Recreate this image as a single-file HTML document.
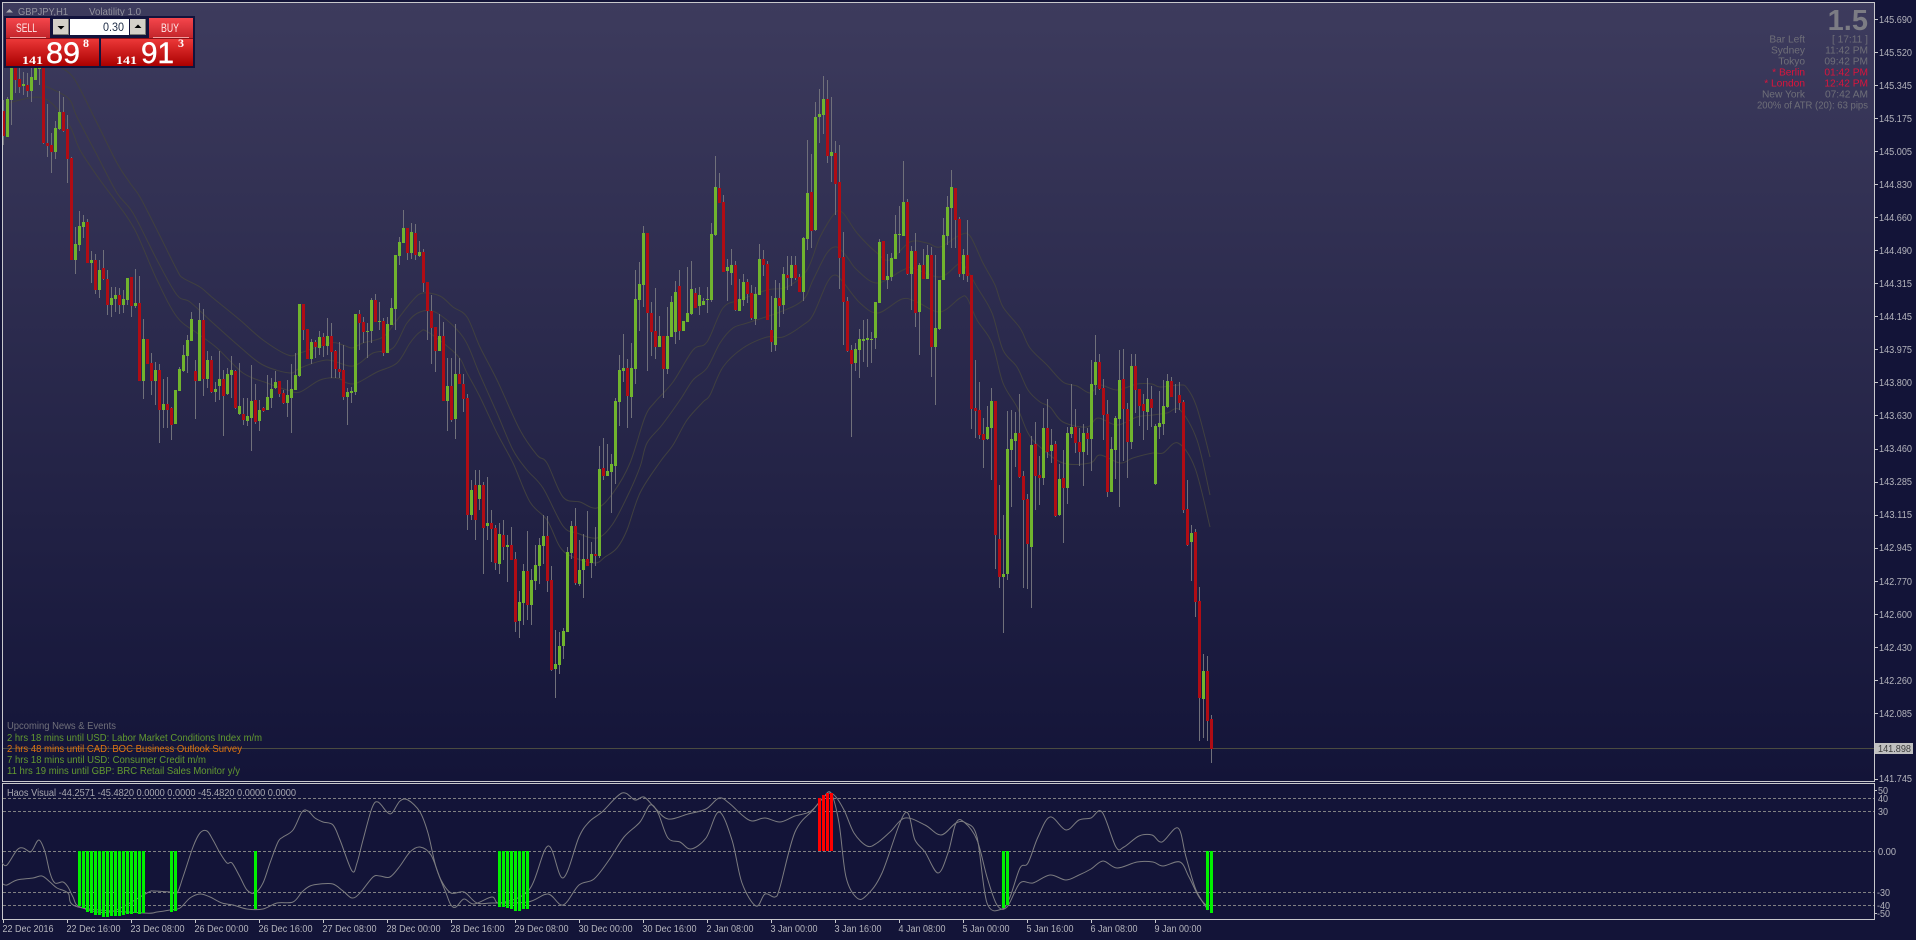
<!DOCTYPE html>
<html lang="en"><head><meta charset="utf-8"><title>GBPJPY,H1</title>
<style>
html,body{margin:0;padding:0;background:#131438;width:1916px;height:940px;overflow:hidden}
svg{display:block}
text{font-family:"Liberation Sans",sans-serif;font-size:10px}
.ax text{fill:#b4b4bc}
.hud text{fill:#6f6f78;text-anchor:end;font-size:10.2px}
.hud text.r{fill:#dc143c}
</style></head><body>
<svg xmlns="http://www.w3.org/2000/svg" width="1916" height="940" viewBox="0 0 1916 940">
<defs>
<linearGradient id="bg" x1="0" y1="0" x2="0" y2="1"><stop offset="0" stop-color="#3d3b5d"/><stop offset="1" stop-color="#131438"/></linearGradient>
<linearGradient id="btn" x1="0" y1="0" x2="0" y2="1"><stop offset="0" stop-color="#f5464c"/><stop offset="1" stop-color="#c2242a"/></linearGradient>
<linearGradient id="big" x1="0" y1="0" x2="0" y2="1"><stop offset="0" stop-color="#ee3a3a"/><stop offset="1" stop-color="#aa0000"/></linearGradient>
</defs>
<rect width="1916" height="940" fill="#131438"/>
<rect x="2" y="2" width="1872" height="779" fill="url(#bg)"/>
<g fill="none" stroke="#404040" stroke-width="1">
<polyline class="s" points="62,68 75,80 97,123 117,163 130,183 140,197 157,230 177,270 183,278 200,287 213,298 240,320 263,340 288,355 300,353 330,343 343,345 352,348 363,343 383,337 397,320 413,300 423,293 440,296 453,307 467,317 480,347 497,380 520,430 537,455 547,463 563,497 580,502 597,508 613,493 630,463 645,417 655,402 673,382 693,350 707,342 723,308 740,300 767,290 787,287 807,270 820,237 835,213 843,213 857,233 877,253 890,260 910,242 927,243 940,247 960,235 970,236 983,263 995,285 1003,307 1020,328 1030,348 1047,365 1063,382 1077,386 1090,393 1100,385 1117,390 1137,384 1152,384 1160,387 1180,385 1187,388 1197,408 1210,457"/>
<polyline class="s" points="43,85 68,98 77,117 97,155 117,193 133,213 157,260 177,295 190,302 213,323 240,347 263,365 290,373 300,368 327,360 353,366 373,353 393,348 407,323 420,312 437,313 463,337 480,375 497,413 513,450 527,470 543,488 563,526 577,533 597,538 612,525 627,497 640,467 647,443 662,425 680,400 693,380 707,368 720,343 733,328 747,323 780,312 803,300 813,280 827,253 837,247 847,257 857,270 877,283 903,270 913,268 940,277 960,263 967,270 977,287 992,313 1003,350 1017,367 1028,390 1040,402 1050,407 1063,422 1087,427 1098,418 1117,425 1137,417 1153,415 1167,413 1180,410 1197,440 1210,495"/>
<polyline class="s" points="8,103 43,98 68,123 80,150 100,180 117,203 135,230 157,280 177,317 197,333 217,348 243,373 267,383 287,390 300,392 320,380 337,378 347,383 357,383 377,372 397,363 410,343 420,332 428,332 457,355 467,373 480,397 497,433 513,463 530,502 547,520 560,547 573,557 595,563 605,557 617,548 627,530 640,493 660,462 673,445 687,420 703,402 710,395 723,367 743,348 767,337 783,337 803,325 813,315 827,283 835,275 843,282 860,303 878,313 902,299 917,302 940,312 960,298 967,298 977,320 992,343 1003,383 1017,407 1028,433 1040,447 1063,463 1090,463 1100,455 1120,463 1133,458 1153,453 1163,453 1178,443 1195,468 1210,527"/>
</g>
<rect x="3" y="748" width="1871" height="1" fill="#4b4b40"/>
<g id="wicks" fill="#70707a" shape-rendering="crispEdges"></g>
<g id="bodies" shape-rendering="crispEdges"></g>

<!-- frame -->
<g fill="#c8c8cc" shape-rendering="crispEdges">
<rect x="2" y="2" width="1872" height="1"/><rect x="2" y="2" width="1" height="779"/>
<rect x="2" y="781" width="1872" height="1"/>
<rect x="1874" y="2" width="1" height="780"/>
<rect x="2" y="783" width="1873" height="1"/><rect x="2" y="783" width="1" height="137"/>
<rect x="2" y="919" width="1873" height="1"/><rect x="1874" y="783" width="1" height="137"/>
</g>

<!-- top label -->
<path d="M6 12.5L9.5 9L13 12.5Z" fill="#a8a8b0"/>
<text x="18" y="15" fill="#92929e" textLength="50" lengthAdjust="spacingAndGlyphs" style="font-size:10.5px">GBPJPY,H1</text>
<text x="89" y="15" fill="#92929e" textLength="52" lengthAdjust="spacingAndGlyphs" style="font-size:10.5px">Volatility 1.0</text>

<!-- trade panel -->
<rect x="4" y="16" width="191" height="52" fill="#12133c"/>
<rect x="6" y="18" width="44" height="20" fill="url(#btn)"/>
<rect x="149" y="18" width="44" height="20" fill="url(#btn)"/>
<rect x="10" y="37" width="36" height="1" fill="#f2a0a0"/>
<rect x="153" y="37" width="36" height="1" fill="#f2a0a0"/>
<rect x="6" y="38" width="93" height="28" fill="url(#big)"/>
<rect x="101" y="38" width="92" height="28" fill="url(#big)"/>
<rect x="6" y="38" width="93" height="1" fill="#8a1018"/>
<rect x="101" y="38" width="92" height="1" fill="#8a1018"/>
<text x="16" y="32" fill="#ffe8e8" textLength="21" lengthAdjust="spacingAndGlyphs" style="font-size:11.5px">SELL</text>
<text x="161" y="32" fill="#ffe8e8" textLength="18" lengthAdjust="spacingAndGlyphs" style="font-size:11.5px">BUY</text>
<rect x="53" y="19" width="16" height="16" fill="#d4d0c8"/>
<rect x="68" y="19" width="1" height="16" fill="#808078"/><rect x="53" y="34" width="16" height="1" fill="#808078"/>
<rect x="70" y="19" width="59" height="16" fill="#ffffff"/>
<rect x="130" y="19" width="16" height="16" fill="#d4d0c8"/>
<rect x="145" y="19" width="1" height="16" fill="#808078"/><rect x="130" y="34" width="16" height="1" fill="#808078"/>
<path d="M57.500 26H64.500L61 29.500Z" fill="#000"/>
<path d="M134.500 28H141.500L138 24.500Z" fill="#000"/>
<text x="103" y="31" fill="#22304a" textLength="21" lengthAdjust="spacingAndGlyphs" style="font-size:12px">0.30</text>
<text x="22" y="64" fill="#fff" textLength="21" lengthAdjust="spacingAndGlyphs" style="font-size:12px;font-family:'Liberation Serif',serif;font-weight:bold">141</text>
<text x="46" y="63" fill="#fff" stroke="#fff" stroke-width=".4" textLength="34" lengthAdjust="spacingAndGlyphs" style="font-size:30px">89</text>
<text x="83" y="47" fill="#fff" style="font-size:12px;font-weight:bold;font-family:'Liberation Serif',serif">8</text>
<text x="116" y="64" fill="#fff" textLength="21" lengthAdjust="spacingAndGlyphs" style="font-size:12px;font-family:'Liberation Serif',serif;font-weight:bold">141</text>
<text x="141" y="63" fill="#fff" stroke="#fff" stroke-width=".4" textLength="33" lengthAdjust="spacingAndGlyphs" style="font-size:30px">91</text>
<text x="178" y="47" fill="#fff" style="font-size:12px;font-weight:bold;font-family:'Liberation Serif',serif">3</text>

<!-- hud -->
<text x="1868" y="30" fill="#7c7c84" text-anchor="end" style="font-size:29px;font-weight:bold">1.5</text>
<g class="hud">
<text x="1805" y="42.500">Bar Left</text><text x="1868" y="42.500">[ 17:11 ]</text>
<text x="1805" y="53.500">Sydney</text><text x="1868" y="53.500">11:42 PM</text>
<text x="1805" y="64.500">Tokyo</text><text x="1868" y="64.500">09:42 PM</text>
<text x="1805" y="75.500" class="r">* Berlin</text><text x="1868" y="75.500" class="r">01:42 PM</text>
<text x="1805" y="86.500" class="r">* London</text><text x="1868" y="86.500" class="r">12:42 PM</text>
<text x="1805" y="97.500">New York</text><text x="1868" y="97.500">07:42 AM</text>
<text x="1868" y="108.500" textLength="111" lengthAdjust="spacingAndGlyphs">200% of ATR (20): 63 pips</text>
</g>

<!-- news -->
<g>
<text x="7" y="729" fill="#70707a" textLength="109" lengthAdjust="spacingAndGlyphs" style="font-size:10.5px">Upcoming News &amp; Events</text>
<text x="7" y="741" fill="#639a30" textLength="255" lengthAdjust="spacingAndGlyphs" style="font-size:10.5px">2 hrs 18 mins until USD: Labor Market Conditions Index m/m</text>
<text x="7" y="752" fill="#e07410" textLength="235" lengthAdjust="spacingAndGlyphs" style="font-size:10.5px">2 hrs 48 mins until CAD: BOC Business Outlook Survey</text>
<text x="7" y="763" fill="#639a30" textLength="199" lengthAdjust="spacingAndGlyphs" style="font-size:10.5px">7 hrs 18 mins until USD: Consumer Credit m/m</text>
<text x="7" y="774" fill="#639a30" textLength="233" lengthAdjust="spacingAndGlyphs" style="font-size:10.5px">11 hrs 19 mins until GBP: BRC Retail Sales Monitor y/y</text>
</g>

<!-- price axis -->
<g id="pticks" fill="#c8c8cc" shape-rendering="crispEdges"></g>
<g class="ax">
<text x="1879" y="23" textLength="33" lengthAdjust="spacingAndGlyphs">145.690</text>
<text x="1879" y="56" textLength="33" lengthAdjust="spacingAndGlyphs">145.520</text>
<text x="1879" y="89" textLength="33" lengthAdjust="spacingAndGlyphs">145.345</text>
<text x="1879" y="122" textLength="33" lengthAdjust="spacingAndGlyphs">145.175</text>
<text x="1879" y="155" textLength="33" lengthAdjust="spacingAndGlyphs">145.005</text>
<text x="1879" y="188" textLength="33" lengthAdjust="spacingAndGlyphs">144.830</text>
<text x="1879" y="221" textLength="33" lengthAdjust="spacingAndGlyphs">144.660</text>
<text x="1879" y="254" textLength="33" lengthAdjust="spacingAndGlyphs">144.490</text>
<text x="1879" y="287" textLength="33" lengthAdjust="spacingAndGlyphs">144.315</text>
<text x="1879" y="320" textLength="33" lengthAdjust="spacingAndGlyphs">144.145</text>
<text x="1879" y="353" textLength="33" lengthAdjust="spacingAndGlyphs">143.975</text>
<text x="1879" y="386" textLength="33" lengthAdjust="spacingAndGlyphs">143.800</text>
<text x="1879" y="419" textLength="33" lengthAdjust="spacingAndGlyphs">143.630</text>
<text x="1879" y="452" textLength="33" lengthAdjust="spacingAndGlyphs">143.460</text>
<text x="1879" y="485" textLength="33" lengthAdjust="spacingAndGlyphs">143.285</text>
<text x="1879" y="518" textLength="33" lengthAdjust="spacingAndGlyphs">143.115</text>
<text x="1879" y="551" textLength="33" lengthAdjust="spacingAndGlyphs">142.945</text>
<text x="1879" y="585" textLength="33" lengthAdjust="spacingAndGlyphs">142.770</text>
<text x="1879" y="618" textLength="33" lengthAdjust="spacingAndGlyphs">142.600</text>
<text x="1879" y="651" textLength="33" lengthAdjust="spacingAndGlyphs">142.430</text>
<text x="1879" y="684" textLength="33" lengthAdjust="spacingAndGlyphs">142.260</text>
<text x="1879" y="717" textLength="33" lengthAdjust="spacingAndGlyphs">142.085</text>
<text x="1879" y="782" textLength="33" lengthAdjust="spacingAndGlyphs">141.745</text>
</g>
<rect x="1875" y="743" width="38" height="11" fill="#c0c0c0"/>
<text x="1878" y="752" fill="#3c3c3c" textLength="33" lengthAdjust="spacingAndGlyphs">141.898</text>

<!-- indicator window -->
<text x="7" y="796" fill="#a8a8b0" textLength="289" lengthAdjust="spacingAndGlyphs" style="font-size:10.5px">Haos Visual -44.2571 -45.4820 0.0000 0.0000 -45.4820 0.0000 0.0000</text>
<g stroke="#808082" stroke-width="1" stroke-dasharray="3 2" shape-rendering="crispEdges">
<line x1="3" y1="798.500" x2="1874" y2="798.500"/>
<line x1="3" y1="811.500" x2="1874" y2="811.500"/>
<line x1="3" y1="851.500" x2="1874" y2="851.500"/>
<line x1="3" y1="892.500" x2="1874" y2="892.500"/>
<line x1="3" y1="905.500" x2="1874" y2="905.500"/>
</g>
<g fill="none" stroke="#7c7c80" stroke-width="1">
<polyline class="s" points="2,863 7,865 17,850 23,848 30,852 33,849 39,840 45,852 50,873 55,883 63,882 68,887 73,897 80,907 110,912 147,893 153,891 170,892 177,893 183,877 193,847 200,833 207,831 213,840 220,853 227,863 232,863 240,877 247,890 255,893 263,883 270,863 278,842 283,837 293,830 302,812 308,811 315,818 323,822 333,825 340,840 352,871 357,863 363,840 372,808 378,802 387,812 392,813 400,801 408,800 420,812 428,833 436,867 446,893 451,905 456,907 464,899 474,904 492,897 500,903 529,890 548,846 563,878 579,837 589,822 602,812 622,793 635,800 644,797 655,808 668,819 688,814 706,809 719,798 729,803 742,815 752,821 765,818 780,822 795,816 811,811 826,795 834,795 844,810 854,833 867,846 877,843 890,832 905,818 925,825 941,835 956,823 966,823 977,837 987,903 1002,909 1010,897 1020,868 1028,863 1038,837 1050,817 1066,830 1079,820 1091,818 1102,812 1116,847 1124,847 1139,836 1152,835 1162,842 1178,828 1186,857 1196,890 1208,910"/>
<polyline class="s" points="3,884 7,885 17,880 33,878 42,876 50,882 57,888 68,893 78,907 143,913 157,912 170,910 180,908 190,898 200,894 210,897 222,903 233,905 247,909 263,909 277,903 293,902 302,892 310,886 320,884 333,884 343,891 352,898 360,893 373,877 380,876 390,877 400,866 410,852 420,847 431,855 441,880 451,893 464,892 477,903 492,903 528,902 548,894 563,905 579,885 594,879 609,860 624,837 640,822 650,805 658,813 668,838 680,842 691,849 706,838 719,812 732,840 742,883 756,906 765,894 775,897 780,887 795,832 813,810 823,798 831,793 839,823 846,877 857,898 867,895 882,873 905,813 915,840 925,852 938,873 948,853 956,823 964,822 977,840 987,877 997,905 1007,907 1020,883 1033,883 1050,875 1066,880 1079,875 1091,869 1103,861 1117,868 1137,862 1153,862 1163,866 1180,862 1189,877 1199,897 1208,907"/>
</g>
<g id="hist" shape-rendering="crispEdges"></g>

<g class="ax">
<text x="1878" y="794" textLength="10" lengthAdjust="spacingAndGlyphs">50</text>
<text x="1878" y="802" textLength="10" lengthAdjust="spacingAndGlyphs">40</text>
<text x="1878" y="815" textLength="10" lengthAdjust="spacingAndGlyphs">30</text>
<text x="1878" y="855" textLength="18" lengthAdjust="spacingAndGlyphs">0.00</text>
<text x="1877" y="896" textLength="13" lengthAdjust="spacingAndGlyphs">-30</text>
<text x="1877" y="909" textLength="13" lengthAdjust="spacingAndGlyphs">-40</text>
<text x="1877" y="917" textLength="13" lengthAdjust="spacingAndGlyphs">-50</text>
</g>
<g fill="#c8c8cc" shape-rendering="crispEdges">
<rect x="1875" y="790" width="2" height="1"/><rect x="1875" y="913" width="2" height="1"/>
<rect x="3" y="920" width="1" height="3"/><rect x="67" y="920" width="1" height="3"/><rect x="131" y="920" width="1" height="3"/><rect x="195" y="920" width="1" height="3"/><rect x="259" y="920" width="1" height="3"/><rect x="323" y="920" width="1" height="3"/><rect x="387" y="920" width="1" height="3"/><rect x="451" y="920" width="1" height="3"/><rect x="515" y="920" width="1" height="3"/><rect x="579" y="920" width="1" height="3"/><rect x="643" y="920" width="1" height="3"/><rect x="707" y="920" width="1" height="3"/><rect x="771" y="920" width="1" height="3"/><rect x="835" y="920" width="1" height="3"/><rect x="899" y="920" width="1" height="3"/><rect x="963" y="920" width="1" height="3"/><rect x="1027" y="920" width="1" height="3"/><rect x="1091" y="920" width="1" height="3"/><rect x="1155" y="920" width="1" height="3"/>
</g>
<g class="ax">
<text x="2.500" y="932" textLength="51" lengthAdjust="spacingAndGlyphs">22 Dec 2016</text>
<text x="66.500" y="932" textLength="54" lengthAdjust="spacingAndGlyphs">22 Dec 16:00</text>
<text x="130.500" y="932" textLength="54" lengthAdjust="spacingAndGlyphs">23 Dec 08:00</text>
<text x="194.500" y="932" textLength="54" lengthAdjust="spacingAndGlyphs">26 Dec 00:00</text>
<text x="258.500" y="932" textLength="54" lengthAdjust="spacingAndGlyphs">26 Dec 16:00</text>
<text x="322.500" y="932" textLength="54" lengthAdjust="spacingAndGlyphs">27 Dec 08:00</text>
<text x="386.500" y="932" textLength="54" lengthAdjust="spacingAndGlyphs">28 Dec 00:00</text>
<text x="450.500" y="932" textLength="54" lengthAdjust="spacingAndGlyphs">28 Dec 16:00</text>
<text x="514.500" y="932" textLength="54" lengthAdjust="spacingAndGlyphs">29 Dec 08:00</text>
<text x="578.500" y="932" textLength="54" lengthAdjust="spacingAndGlyphs">30 Dec 00:00</text>
<text x="642.500" y="932" textLength="54" lengthAdjust="spacingAndGlyphs">30 Dec 16:00</text>
<text x="706.500" y="932" textLength="47" lengthAdjust="spacingAndGlyphs">2 Jan 08:00</text>
<text x="770.500" y="932" textLength="47" lengthAdjust="spacingAndGlyphs">3 Jan 00:00</text>
<text x="834.500" y="932" textLength="47" lengthAdjust="spacingAndGlyphs">3 Jan 16:00</text>
<text x="898.500" y="932" textLength="47" lengthAdjust="spacingAndGlyphs">4 Jan 08:00</text>
<text x="962.500" y="932" textLength="47" lengthAdjust="spacingAndGlyphs">5 Jan 00:00</text>
<text x="1026.500" y="932" textLength="47" lengthAdjust="spacingAndGlyphs">5 Jan 16:00</text>
<text x="1090.500" y="932" textLength="47" lengthAdjust="spacingAndGlyphs">6 Jan 08:00</text>
<text x="1154.500" y="932" textLength="47" lengthAdjust="spacingAndGlyphs">9 Jan 00:00</text>
</g>
</svg>
<script>
var C="3 r 100 111 136 145,7 g 97 99 137 137,11 g 58 60 100 125,15 r 55 60 80 93,19 r 68 79 87 93,23 g 72 84 86 95,27 r 73 85 91 97,31 g 67 77 91 102,35 g 60 65 80 80,39 g 60 67 69 85,43 r 60 65 143 144,47 r 104 143 146 157,51 r 133 145 152 173,55 g 121 128 152 159,59 g 91 112 129 130,63 r 97 112 131 132,67 r 115 129 159 183,71 r 157 158 260 260,75 g 227 244 260 274,79 g 211 226 245 251,83 g 215 222 227 238,87 r 219 222 263 263,91 g 251 260 263 283,95 r 254 260 290 294,99 g 260 270 290 298,103 r 250 268 279 280,107 r 270 279 305 315,111 g 287 298 305 317,115 g 287 295 299 312,119 r 288 295 305 314,123 g 290 299 305 313,127 g 278 278 300 305,131 r 277 277 306 317,135 g 269 303 306 308,139 r 276 303 381 381,143 g 319 339 381 399,147 r 339 339 364 364,151 r 353 363 381 395,155 g 362 370 381 405,159 r 364 370 410 443,163 g 379 404 410 428,167 r 377 404 410 428,171 r 407 408 425 440,175 g 390 390 424 424,179 g 367 369 391 391,183 g 345 355 371 372,187 g 335 340 356 373,191 g 312 319 341 341,195 r 360 371 381 419,199 g 303 320 381 381,203 r 309 320 379 396,207 g 351 360 379 388,211 r 356 360 392 393,215 g 382 389 392 402,219 g 351 379 386 400,223 r 370 379 396 436,227 g 368 374 394 395,231 g 356 370 375 398,235 r 370 371 408 409,239 g 363 406 414 415,243 r 398 414 420 425,247 g 398 416 421 426,251 g 365 401 418 451,255 r 384 400 422 424,259 g 400 410 421 431,263 r 407 408 411 412,267 g 375 397 410 410,271 g 378 389 398 408,275 g 371 382 388 389,279 r 381 381 394 397,283 r 390 393 403 404,287 g 380 395 403 417,291 g 364 389 398 433,295 g 353 375 390 390,299 g 304 304 376 377,303 r 304 304 330 340,307 r 329 329 359 359,311 g 339 342 359 364,315 r 340 342 347 358,319 g 331 337 348 355,323 r 333 337 346 357,327 g 318 336 346 355,331 r 323 336 352 378,335 r 350 351 369 378,339 r 342 369 372 378,343 r 345 370 397 400,347 g 388 392 397 425,351 g 387 391 393 403,355 g 314 314 392 395,359 r 310 314 323 350,363 r 317 322 332 343,367 g 323 331 332 358,371 g 298 300 331 343,375 r 294 300 322 322,379 g 302 321 322 330,383 r 318 321 353 356,387 g 317 324 353 353,391 g 298 308 325 325,395 g 255 255 309 330,399 g 237 242 256 265,403 g 210 228 243 243,407 r 228 228 253 260,411 g 223 232 253 259,415 r 224 233 255 260,419 g 241 252 256 257,423 r 249 252 283 292,427 r 282 282 311 340,431 r 295 311 328 364,435 r 327 327 351 372,439 g 314 336 351 351,443 r 322 336 401 401,447 g 358 386 401 431,451 r 358 386 420 422,455 g 324 374 419 439,459 r 358 374 384 384,463 r 374 384 399 412,467 r 394 398 515 530,471 g 480 490 515 520,475 r 470 485 520 540,479 g 470 485 499 510,483 r 482 485 528 574,487 g 477 523 526 540,491 r 510 523 529 562,495 r 525 528 563 570,499 g 523 534 564 574,503 r 520 535 547 560,507 g 535 545 547 582,511 r 527 545 560 560,515 r 552 559 622 632,519 g 591 602 621 638,523 g 564 571 603 625,527 r 531 571 605 620,531 g 569 580 605 625,535 g 545 565 581 590,539 g 538 545 566 584,543 g 515 536 546 564,547 r 516 536 581 592,551 r 566 580 670 671,555 g 630 664 669 698,559 g 632 646 665 674,563 g 628 631 646 659,567 g 547 552 632 632,571 g 521 526 553 559,575 r 508 526 583 585,579 g 540 570 584 586,583 g 534 559 570 598,587 r 511 559 566 566,591 g 542 554 563 578,595 r 527 554 556 566,599 g 446 469 556 558,603 r 438 468 476 480,607 g 444 471 476 476,611 g 454 464 472 513,615 g 398 401 466 484,619 g 355 370 402 426,623 g 334 368 371 382,627 r 359 368 396 428,631 g 343 368 397 418,635 g 270 299 369 384,639 g 262 284 300 331,643 g 226 233 285 307,647 r 233 233 313 371,651 r 302 313 332 356,655 r 288 331 347 359,659 g 316 336 347 347,663 r 336 336 369 398,667 g 307 336 369 374,671 g 296 302 337 337,675 g 281 292 332 344,679 r 270 286 331 340,683 g 321 321 331 331,687 g 267 313 322 322,691 g 261 289 314 315,695 r 288 293 308 308,699 g 287 295 306 315,703 g 298 301 305 305,707 g 287 299 300 313,711 g 223 234 300 302,715 g 156 187 235 236,719 r 173 188 203 203,723 r 195 202 272 272,727 g 259 267 271 301,731 g 249 265 273 285,735 r 261 265 310 311,739 g 279 299 311 311,743 g 274 282 300 306,747 r 279 282 294 303,751 r 285 293 318 320,755 g 287 294 319 325,759 g 244 259 295 295,763 r 250 259 265 276,767 r 261 264 320 320,771 r 296 330 342 352,775 g 280 298 345 351,779 r 283 298 306 327,783 g 267 274 305 314,787 r 256 275 278 290,791 g 256 265 278 286,795 r 256 265 278 280,799 r 274 277 292 292,803 g 237 238 292 301,807 g 140 193 239 250,811 r 154 192 231 248,815 g 102 117 230 231,819 g 89 114 117 143,823 g 76 99 115 134,827 r 80 99 156 163,831 g 97 152 156 182,835 r 141 153 184 215,839 r 145 182 258 289,843 r 232 257 302 345,847 r 297 301 351 352,851 r 345 350 364 437,855 g 343 349 363 371,859 g 329 339 350 378,863 g 320 339 341 362,867 g 319 338 340 367,871 g 332 339 340 363,875 g 302 302 338 349,879 g 239 242 303 303,883 r 241 241 280 280,887 g 254 276 280 289,891 g 253 258 277 281,895 g 215 234 259 259,899 g 206 234 235 253,903 g 161 202 236 236,907 r 199 202 274 275,911 g 246 251 274 310,915 r 233 251 313 327,919 g 263 265 312 355,923 r 249 265 279 279,927 g 245 255 279 279,931 r 247 255 347 377,935 g 255 328 347 405,939 g 280 280 329 330,943 g 218 235 280 280,947 g 196 207 236 245,951 g 170 187 208 248,955 r 188 188 220 248,959 r 217 219 274 277,963 g 249 255 274 280,967 r 220 255 276 282,971 r 275 275 409 429,975 r 360 408 411 438,979 r 382 410 435 439,983 r 418 434 440 468,987 g 406 427 439 440,991 g 388 401 428 480,995 r 401 401 535 569,999 r 485 539 577 588,1003 g 515 574 577 633,1007 g 411 449 574 580,1011 g 410 439 450 507,1015 g 412 433 441 467,1019 r 394 433 477 478,1023 r 471 476 500 588,1027 r 494 499 544 589,1031 g 436 445 547 608,1035 r 422 444 476 510,1039 r 456 475 478 505,1043 g 408 428 478 485,1047 r 399 428 452 458,1051 g 429 445 451 463,1055 r 441 444 516 517,1059 g 464 479 515 516,1063 r 450 478 488 543,1067 g 427 433 488 504,1071 g 384 427 434 438,1075 r 409 427 443 453,1079 r 428 442 452 466,1083 g 424 433 452 486,1087 r 428 433 439 455,1091 g 360 384 439 471,1095 g 335 362 385 395,1099 r 354 362 389 390,1103 r 379 388 415 440,1107 r 400 414 492 497,1111 g 437 449 492 492,1115 g 416 418 450 479,1119 g 350 380 419 507,1123 r 349 379 409 461,1127 r 403 409 442 478,1131 g 354 366 442 449,1135 r 354 366 390 413,1139 r 389 389 406 426,1143 r 394 404 411 440,1147 g 378 399 412 430,1151 r 386 399 408 427,1155 g 424 426 484 485,1159 g 391 423 427 439,1163 g 380 406 424 435,1167 g 374 381 407 408,1171 r 377 381 397 397,1175 g 384 400 400 413,1179 r 382 395 403 410,1183 r 400 402 510 513,1187 r 480 509 545 546,1191 g 525 533 542 581,1195 r 529 532 602 617,1199 r 587 601 698 741,1203 g 654 671 699 738,1207 r 656 671 721 741,1211 r 715 719 749 763";
var NS="http://www.w3.org/2000/svg",W=document.getElementById("wicks"),B=document.getElementById("bodies");
function R(p,x,y,w,h,f){var e=document.createElementNS(NS,"rect");e.setAttribute("x",x);e.setAttribute("y",y);e.setAttribute("width",w);e.setAttribute("height",h);if(f)e.setAttribute("fill",f);p.appendChild(e)}
C.split(",").forEach(function(s){var a=s.split(" "),x=+a[0],c=a[1]=="g"?"#70b42e":"#b00c14",wt=+a[2],bt=+a[3],bb=+a[4],wb=+a[5];
R(W,x,wt,1,Math.max(wb-wt,1));if(bb>bt)R(B,x-1,bt,3,bb-bt,c);});
var H=document.getElementById("hist");
[[79,906],[83,908],[87,912],[91,913],[95,915],[99,915],[103,917],[107,917],[111,916],[115,916],[119,916],[123,915],[127,914],[131,914],[135,913],[139,914],[143,913],[171,912],[175,911],[255,909],[499,907],[503,907],[507,908],[511,909],[515,911],[519,911],[523,909],[527,909],[1003,908],[1007,905],[1207,910],[1211,913]].forEach(function(b){R(H,b[0]-1,851,3,b[1]-851,"#00f000")});
[[819,798],[823,795],[827,793],[831,793]].forEach(function(b){R(H,b[0]-1,b[1],3,851-b[1],"#ff0000")});
var T=document.getElementById("pticks");
for(var k=0;k<24;k++){if(k!=22)R(T,1875,Math.round(19+33.04*k),3,1)}
/* smooth the indicator curves with a Catmull-Rom spline */
Array.prototype.forEach.call(document.querySelectorAll("polyline.s"),function(pl){
var p=pl.getAttribute("points").split(" ").map(function(q){return q.split(",").map(Number)}),d="M"+p[0][0]+" "+p[0][1];
for(var i=0;i<p.length-1;i++){var a=p[Math.max(i-1,0)],b=p[i],c=p[i+1],e=p[Math.min(i+2,p.length-1)];
d+="C"+(b[0]+(c[0]-a[0])/6).toFixed(1)+" "+(b[1]+(c[1]-a[1])/6).toFixed(1)+" "+(c[0]-(e[0]-b[0])/6).toFixed(1)+" "+(c[1]-(e[1]-b[1])/6).toFixed(1)+" "+c[0]+" "+c[1];}
var n=document.createElementNS(NS,"path");n.setAttribute("d",d);pl.parentNode.replaceChild(n,pl);});
</script>
</body></html>
